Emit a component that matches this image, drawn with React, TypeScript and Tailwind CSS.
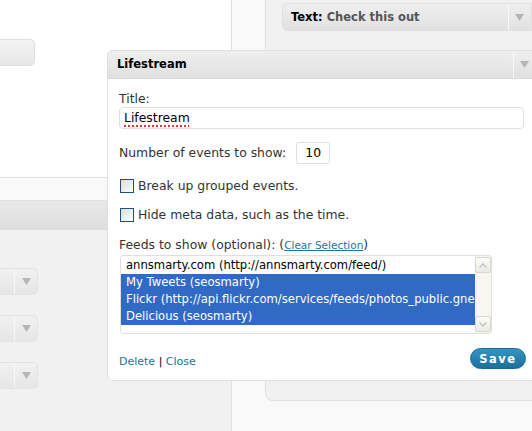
// Lifestream widget options dialog over a WordPress widgets screen (old admin look).
import React from "react";

function SideDropdown() {
  return (
    <div className="flex w-[38px] h-[27px] rounded-r-[5px] border border-l-0 border-[#e3e3e3] bg-gradient-to-b from-[#f1f1f1] to-[#e6e6e6]">
      <div className="w-[15px] border-r border-[#f8f8f8]" />
      <div className="flex-1 flex items-center justify-center">
        <Arrow />
      </div>
    </div>
  );
}

function Arrow() {
  return (
    <svg width="9" height="7" viewBox="0 0 9 7">
      <path d="M0 0 L9 0 L4.5 7 Z" fill="#b5b5b5" />
    </svg>
  );
}

function Checkbox() {
  return (
    <span className="inline-block w-[14px] h-[14px] ml-px border border-[#1c5180] bg-gradient-to-br from-[#dcdcd6] to-[#ffffff]" />
  );
}

function ScrollButton({ up }: { up?: boolean }) {
  return (
    <div className="h-[16px] flex items-center justify-center rounded-[2px] border border-[#d9d7ce] bg-gradient-to-b from-[#fbfbf8] to-[#ecebe3]">
      <svg width="8" height="5" viewBox="0 0 8 5">
        <path
          d={up ? "M0.5 4.5 L4 1 L7.5 4.5" : "M0.5 0.5 L4 4 L7.5 0.5"}
          fill="none"
          stroke="#c3c6cc"
          strokeWidth="1.5"
        />
      </svg>
    </div>
  );
}

export default function App() {
  const feeds = [
    { label: "annsmarty.com (http://annsmarty.com/feed/)", selected: false },
    { label: "My Tweets (seosmarty)", selected: true },
    { label: "Flickr (http://api.flickr.com/services/feeds/photos_public.gne", selected: true },
    { label: "Delicious (seosmarty)", selected: true },
  ];

  return (
    <div className="relative w-[532px] h-[431px] overflow-hidden bg-[#f9f9f9] font-['DejaVu_Sans',Verdana,sans-serif] text-[#333]">
      {/* page behind the dialog */}
      <div className="flex h-full">
        <div className="w-[236px] flex flex-col bg-white">
          <div className="h-[178px] pt-[39px] border-b border-[#dfdfdf]">
            <div className="w-[35px] h-[27px] rounded-r-[5px] border border-l-0 border-[#dedede] bg-gradient-to-b from-[#f3f3f3] to-[#e7e7e7]" />
          </div>
          <div className="h-[23px] bg-[#f9f9f9] border-b border-[#dfdfdf]" />
          <div className="h-[29px] bg-gradient-to-b from-[#e8e8e8] to-[#dedede]" />
          <div className="flex-1 bg-[#f1f1f1] pt-[38px] flex flex-col gap-[20px]">
            <SideDropdown />
            <SideDropdown />
            <SideDropdown />
          </div>
        </div>
        <div className="w-px bg-[#dfdfdf]" />
        <div className="flex-1 pl-[33px]">
          <div className="h-[401px] bg-[#f1f1f1] border-l border-b border-[#dfdfdf] rounded-bl-[8px] pt-[3px] pl-[16px]">
            <div className="flex w-[250px] h-[28px] rounded-l-[6px] border border-[#dfdfdf] bg-gradient-to-b from-[#efefef] to-[#e1e1e1]">
              <div className="w-[226px] border-r border-[#f7f7f7] flex items-center pt-px pl-[8px] text-[11.5px] font-bold">
                <span className="text-black">Text:</span>
                <span className="text-[#555] ml-[4px]">Check this out</span>
              </div>
              <div className="w-[20px] flex items-center justify-center">
                <Arrow />
              </div>
            </div>
          </div>
        </div>
      </div>

      {/* dialog */}
      <div className="absolute left-[107px] top-[50px] w-[430px] h-[331px] flex flex-col bg-white border border-[#dfdfdf] rounded-tl-[5px] rounded-bl-[6px] overflow-hidden">
        <div className="flex h-[28px] shrink-0 bg-gradient-to-b from-[#efefef] to-[#e0e0e0] border-b border-[#dcdcdc]">
          <div className="w-[406px] border-r border-[#f7f7f7] flex items-center pt-px pl-[9px] text-[11.5px] font-bold text-black">
            Lifestream
          </div>
          <div className="w-[20px] flex items-center justify-center">
            <Arrow />
          </div>
        </div>

        <div className="pl-[11px] pr-[10px] pt-[12px] text-[12.4px] leading-[16px]">
          <div>Title:</div>
          <div className="h-[22px] w-[405px] flex items-center pl-[4px] rounded-[4px] border border-[#dfdfdf] text-black">
            <span className="underline decoration-dotted decoration-[#e33] decoration-2 underline-offset-[3px]">Lifestream</span>
          </div>

          <div className="mt-[13px] h-[22px] flex items-center gap-[10px]">
            <span>Number of events to show:</span>
            <span className="w-[34px] h-[22px] flex items-center justify-center rounded-[3px] border border-[#dfdfdf] text-black">10</span>
          </div>

          <div className="mt-[14px] flex items-center gap-[4px]">
            <Checkbox />
            <span>Break up grouped events.</span>
          </div>
          <div className="mt-[13px] flex items-center gap-[4px]">
            <Checkbox />
            <span>Hide meta data, such as the time.</span>
          </div>

          <div className="mt-[14px] flex items-baseline">
            <span>Feeds to show (optional):&nbsp;</span>
            <span>(</span>
            <span className="text-[10.5px] text-[#21759b] underline">Clear Selection</span>
            <span>)</span>
          </div>

          <div className="mt-[2px] ml-px w-[372px] h-[79px] flex rounded-[3px] border border-[#dfdfdf] overflow-hidden">
            <div className="flex-1 pt-px text-[11.6px] leading-[17px] overflow-hidden whitespace-nowrap">
              {feeds.map((f) => (
                <div
                  key={f.label}
                  className={f.selected ? "pl-[5px] bg-[#316ac5] text-white" : "pl-[5px] text-black"}
                >
                  {f.label}
                </div>
              ))}
            </div>
            <div className="w-[16px] flex flex-col justify-between bg-[#f7f6f1] py-px">
              <ScrollButton up />
              <ScrollButton />
            </div>
          </div>

          <div className="mt-[14px] h-[21px] flex items-center justify-between">
            <div className="mt-[6px] text-[11px]">
              <span className="text-[#21759b]">Delete</span>
              <span className="text-black"> | </span>
              <span className="text-[#21759b]">Close</span>
            </div>
            <button className="w-[56px] h-[21px] rounded-full border border-[#1b6a92] bg-gradient-to-b from-[#3394c4] to-[#1f6f99] text-white text-[11.5px] font-bold tracking-[1.5px]">
              Save
            </button>
          </div>
        </div>
      </div>
    </div>
  );
}
